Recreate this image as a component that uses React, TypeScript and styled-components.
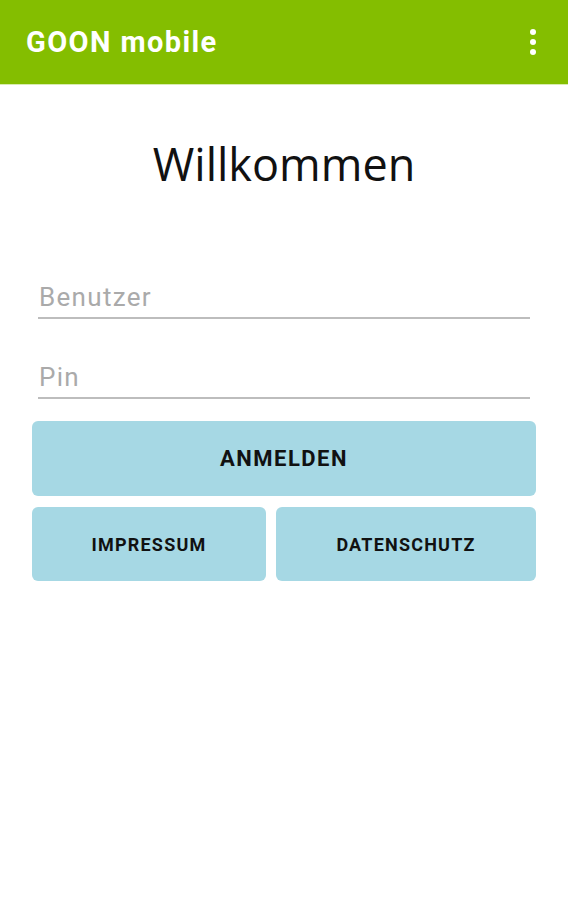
import React from 'react';
import styled, { createGlobalStyle } from 'styled-components';

const GlobalStyle = createGlobalStyle`
  body {
    margin: 0;
    background: #fff;
    font-family: Roboto, 'Liberation Sans', sans-serif;
  }
`;

const Page = styled.div`
  width: 568px;
  min-height: 900px;
  background: #fff;
`;

const AppBar = styled.header`
  height: 85px;
  background: #84be00;
  display: flex;
  align-items: center;
  justify-content: space-between;
  padding: 0 32px 0 26px;
  box-sizing: border-box;
  border-bottom: 1px solid #d8ecb0;
`;

const Title = styled.h1`
  margin: 0;
  color: #fff;
  font-family: Roboto, sans-serif;
  font-weight: 700;
  font-size: 29px;
  letter-spacing: 1.4px;
`;

const MenuButton = styled.button`
  border: 0;
  background: none;
  padding: 0;
  display: flex;
  flex-direction: column;
  gap: 4px;
  cursor: pointer;
`;

const Dot = styled.span`
  width: 6px;
  height: 6px;
  border-radius: 50%;
  background: #fff;
`;

const Content = styled.main`
  padding: 0 32px;
  display: flex;
  flex-direction: column;
`;

const Welcome = styled.h2`
  margin: 51px 0 0;
  text-align: center;
  font-family: 'Open Sans', sans-serif;
  font-weight: 400;
  font-size: 45px;
  line-height: 56px;
  color: #111;
`;

const Form = styled.form`
  margin-top: 77px;
  padding: 0 6px;
  display: flex;
  flex-direction: column;
  gap: 30px;
`;

const Field = styled.input`
  border: 0;
  border-bottom: 2px solid #bdbdbd;
  outline: none;
  padding: 7px 0 0 1px;
  height: 50px;
  box-sizing: border-box;
  font-family: Roboto, sans-serif;
  font-size: 26px;
  letter-spacing: 1.3px;
  color: #222;
  background: transparent;

  &::placeholder {
    color: #aaaaaa;
  }
`;

const Actions = styled.div`
  margin-top: 22px;
  display: flex;
  flex-direction: column;
  gap: 11px;
`;

const Row = styled.div`
  display: grid;
  grid-template-columns: 234fr 260fr;
  gap: 10px;
`;

const ActionButton = styled.button<{ $big?: boolean }>`
  height: ${({ $big }) => ($big ? '75px' : '74px')};
  border: 0;
  border-radius: 6px;
  background: #a6d8e4;
  color: #111;
  font-family: Roboto, sans-serif;
  font-weight: 700;
  font-size: ${({ $big }) => ($big ? '22px' : '18px')};
  letter-spacing: ${({ $big }) => ($big ? '1.5px' : '1.2px')};
  cursor: pointer;
`;

export default function App() {
  return (
    <Page>
      <GlobalStyle />
      <AppBar>
        <Title>GOON mobile</Title>
        <MenuButton aria-label="Menü">
          <Dot />
          <Dot />
          <Dot />
        </MenuButton>
      </AppBar>
      <Content>
        <Welcome>Willkommen</Welcome>
        <Form onSubmit={(e) => e.preventDefault()}>
          <Field placeholder="Benutzer" />
          <Field placeholder="Pin" type="password" />
        </Form>
        <Actions>
          <ActionButton $big>ANMELDEN</ActionButton>
          <Row>
            <ActionButton>IMPRESSUM</ActionButton>
            <ActionButton>DATENSCHUTZ</ActionButton>
          </Row>
        </Actions>
      </Content>
    </Page>
  );
}
